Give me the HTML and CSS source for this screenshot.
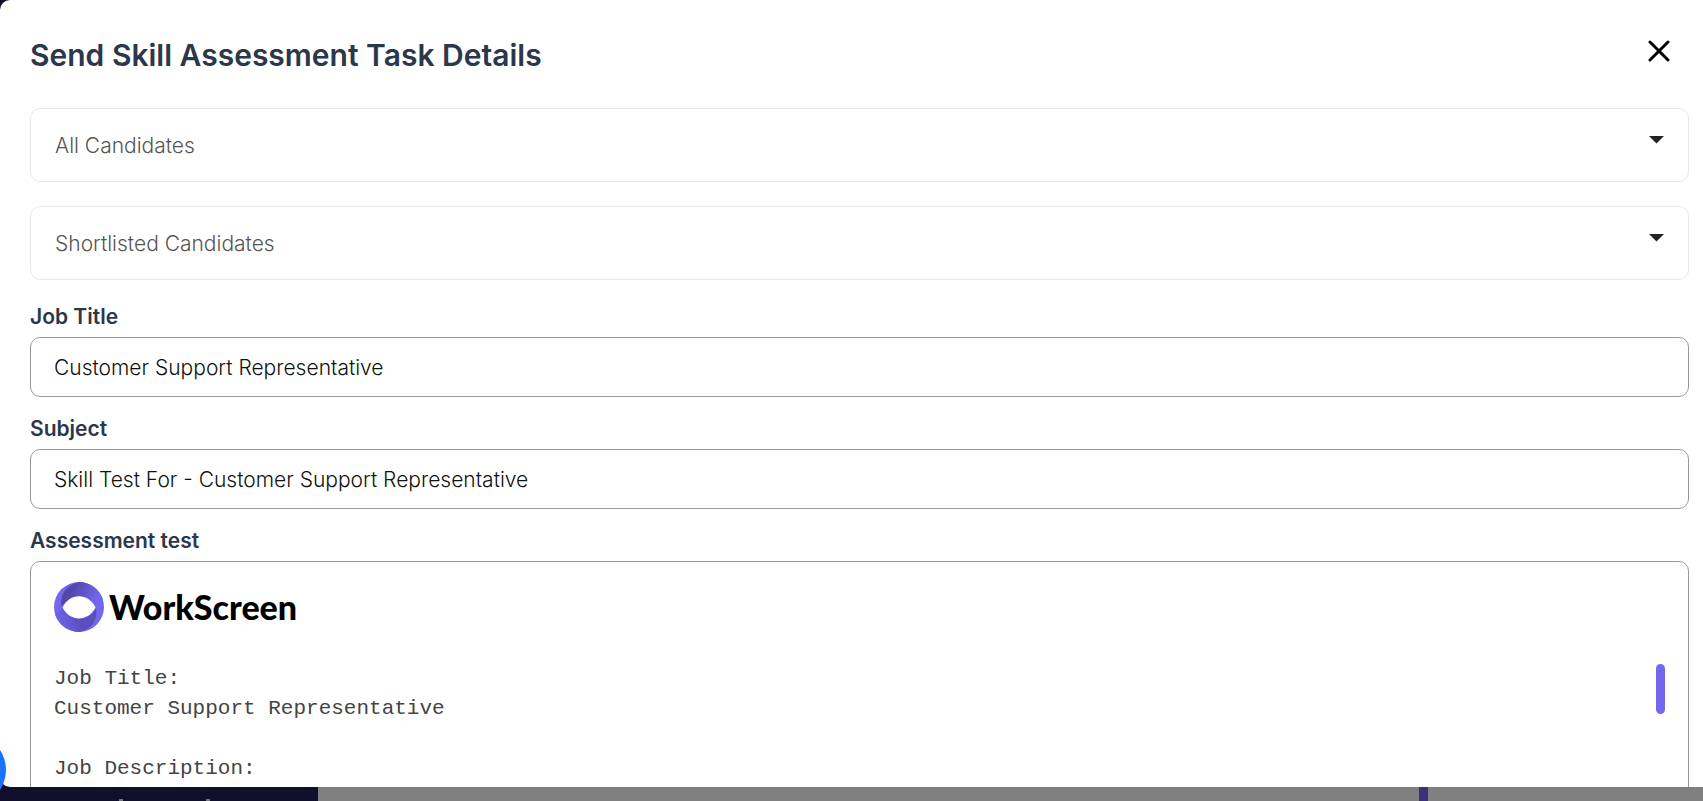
FILE: index.html
```html
<!DOCTYPE html>
<html lang="en">
<head>
<meta charset="utf-8">
<meta name="viewport" content="width=device-width, initial-scale=1">
<title>Send Skill Assessment Task Details</title>
<link rel="stylesheet" href="styles.css">
</head>
<body>
<div class="backdrop" aria-hidden="true">
  <div class="backdrop-sidebar"><span class="tip"></span><span class="tip"></span></div>
  <div class="backdrop-page"></div>
  <div class="backdrop-scroll"></div>
  <div class="backdrop-edge"></div>
</div>
<main class="modal" role="dialog" aria-labelledby="dialog-title">
  <header class="modal-header">
    <h1 class="modal-title" id="dialog-title">Send Skill Assessment Task Details</h1>
    <button class="close" type="button" aria-label="Close">
      <svg viewBox="0 0 22 22" width="22" height="22"><path d="M2 2 20 20M20 2 2 20" fill="none" stroke="#000" stroke-width="3" stroke-linecap="round"/></svg>
    </button>
  </header>
  <form class="form">
    <div class="picker">
      <select class="select" aria-label="All Candidates"><option>All Candidates</option></select>
      <svg class="caret" viewBox="0 0 15 8" width="15" height="8"><path d="M0 0H15L7.500 7.500Z" fill="#222"/></svg>
    </div>
    <div class="picker">
      <select class="select" aria-label="Shortlisted Candidates"><option>Shortlisted Candidates</option></select>
      <svg class="caret" viewBox="0 0 15 8" width="15" height="8"><path d="M0 0H15L7.500 7.500Z" fill="#222"/></svg>
    </div>
    <div class="field">
      <label class="label" for="job-title">Job Title</label>
      <input class="input" id="job-title" type="text" value="Customer Support Representative">
    </div>
    <div class="field">
      <label class="label" for="subject">Subject</label>
      <input class="input" id="subject" type="text" value="Skill Test For - Customer Support Representative">
    </div>
    <div class="field">
      <span class="label" id="test-label">Assessment test</span>
      <section class="test" aria-labelledby="test-label">
        <div class="brand">
          <svg class="brand-mark" viewBox="0 0 50 50" width="50" height="50" aria-hidden="true">
            <defs>
              <linearGradient id="top" x1="0" y1="0" x2="1" y2="0.300"><stop offset="0.300" stop-color="#5048a8"/><stop offset="1" stop-color="#7367f0"/></linearGradient>
              <linearGradient id="bottom" x1="1" y1="0.500" x2="0" y2="0.700"><stop offset="0.400" stop-color="#5a50bd"/><stop offset="1" stop-color="#7367f0"/></linearGradient>
            </defs>
            <circle cx="25" cy="25" r="25" fill="#7367f0"/>
            <path d="M8 25C5 14 12 3 25 0C37 0 46 8 49 18L42 25C36 11 15 11 8 25Z" fill="url(#top)"/>
            <path d="M42 26C44 38 38 47 26 50C14 50 4 42 1 32L9 26C15 40 35 40 42 26Z" fill="url(#bottom)"/>
            <path d="M8.500 25.500C16 10.500 34 10.500 41.500 25.500C34 40 16 40 8.500 25.500Z" fill="#fff"/>
          </svg>
          <span class="brand-name">WorkScreen</span>
        </div>
        <div class="scroller">
          <div class="copy">
            <p class="line">Job Title:</p>
            <p class="line">Customer Support Representative</p>
            <p class="line line-gap">Job Description:</p>
          </div>
          <div class="thumb"></div>
        </div>
      </section>
    </div>
  </form>
</main>
<button class="chat" type="button" aria-label="Open chat"></button>
</body>
</html>
```
FILE: styles.css
```css
* { box-sizing: border-box; }
body {
  margin: 0;
  height: 100vh;
  overflow: hidden;
  position: relative;
  font-family: "Inter", "Liberation Sans", sans-serif;
  color: #222;
}
.backdrop {
  position: absolute;
  inset: 0;
  display: flex;
  background: #808080;
}
.backdrop-sidebar {
  width: 318px;
  background: #120f2d;
  display: flex;
  align-items: flex-end;
  gap: 83px;
  padding-left: 119px;
}
.tip { width: 4px; height: 2px; background: #77757f; }
.backdrop-page { flex: 1; }
.backdrop-scroll { width: 9px; background: #3a3378; }
.backdrop-edge { width: 275px; }
.modal {
  position: relative;
  height: calc(100vh - 14px);
  overflow: hidden;
  padding: 32px 14px 0 30px;
  background: #fff;
  border-radius: 10px 0 0 10px;
}
.modal-header {
  display: flex;
  justify-content: space-between;
  align-items: flex-start;
  padding-right: 19px;
  margin-bottom: 30px;
}
.modal-title {
  margin: 0;
  font-size: 30px;
  line-height: 46px;
  font-weight: 600;
  color: #2b374b;
}
.close {
  display: flex;
  padding: 8px 0;
  border: 0;
  background: none;
}
.form { display: flex; flex-direction: column; }
.picker { position: relative; margin-bottom: 24px; }
.select {
  display: block;
  width: 100%;
  height: 74px;
  padding: 0 48px 0 24px;
  border: 1px solid #e6e8ee;
  border-radius: 10px;
  background: #fff;
  appearance: none;
  font: inherit;
  font-size: 21px;
  font-weight: 300;
  color: #555;
}
.caret { position: absolute; right: 25px; top: 28px; pointer-events: none; }
.field { display: flex; flex-direction: column; margin-bottom: 18px; }
.label {
  font-size: 21px;
  line-height: 28px;
  font-weight: 600;
  color: #2b374b;
  margin-bottom: 6px;
}
.picker + .field { margin-top: -1px; }
.input {
  width: 100%;
  height: 60px;
  padding: 0 23px;
  border: 1px solid #999;
  border-radius: 10px;
  background: #fff;
  font: inherit;
  font-size: 21px;
  font-weight: 300;
  color: #111;
}
.test {
  padding: 20px 23px;
  border: 1px solid #999;
  border-radius: 10px;
}
.brand { display: flex; align-items: center; gap: 5px; margin-bottom: 32px; }
.brand-name {
  font-family: "Lato", sans-serif;
  font-size: 34px;
  line-height: 50px;
  font-weight: 900;
  color: #000;
}
.scroller { display: flex; justify-content: space-between; align-items: flex-start; }
.copy {
  font-family: "Liberation Mono", "Courier New", monospace;
  font-size: 21px;
  line-height: 30px;
  color: #444;
}
.line { margin: 0; }
.line-gap { margin: 30px 0; }
.thumb { width: 9px; height: 50px; border-radius: 5px; background: #7367f0; }
.chat {
  position: absolute;
  left: -66px;
  bottom: -5px;
  width: 72px;
  height: 72px;
  padding: 0;
  border: 0;
  border-radius: 50%;
  background: #1a73f8;
  box-shadow: 0 2px 16px rgba(0, 0, 0, 0.06);
}
```
